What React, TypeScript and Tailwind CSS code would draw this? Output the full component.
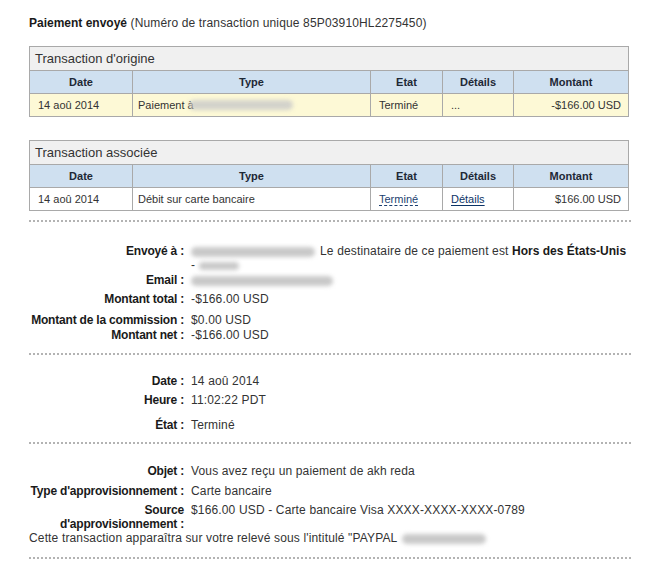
import React from "react";

const Blur = ({ w, h = 10, className = "" }: { w: number; h?: number; className?: string }) => (
  <span
    className={`inline-block align-middle rounded-full bg-[#c9c9c9] blur-[2px] ${className}`}
    style={{ width: w, height: h }}
  />
);

const Dotted = ({ className = "" }: { className?: string }) => (
  <div
    className={`h-[2px] w-[602px] bg-[linear-gradient(to_right,#b3b3b3_50%,transparent_50%)] bg-[length:4px_2px] ${className}`}
  />
);

const cols = "grid grid-cols-[102px_238px_72px_71px_1fr]";

function Table({
  title,
  row,
  yellow,
}: {
  title: string;
  row: React.ReactNode[];
  yellow?: boolean;
}) {
  const heads = ["Date", "Type", "Etat", "Détails", "Montant"];
  return (
    <div className="w-[600px] border border-[#a9a9a9]">
      <div className="h-[24px] bg-[#f0f0f0] border-b border-[#a9a9a9] pl-[5px] flex items-center text-[13px] text-[#333]">
        {title}
      </div>
      <div className={`${cols} h-[23px] bg-[#cfe0f0] border-b border-[#a9a9a9]`}>
        {heads.map((h, i) => (
          <div
            key={h}
            className={`flex items-center justify-center text-[11px] font-bold text-[#1e2836] ${i > 0 ? "border-l border-[#a9a9a9]" : ""}`}
          >
            {h}
          </div>
        ))}
      </div>
      <div className={`${cols} h-[22px] ${yellow ? "bg-[#fdf9d6]" : "bg-white"} text-[11px] text-[#333]`}>
        {row.map((c, i) => (
          <div
            key={i}
            className={`flex items-center whitespace-nowrap ${i > 0 ? "border-l border-[#a9a9a9]" : ""} ${
              i === 0 ? "pl-[8px]" : i === 1 ? "pl-[5px]" : i === 4 ? "justify-end pr-[7px]" : "pl-[8px]"
            }`}
          >
            {c}
          </div>
        ))}
      </div>
    </div>
  );
}

const Row = ({
  label,
  children,
  className = "",
}: {
  label: React.ReactNode;
  children?: React.ReactNode;
  className?: string;
}) => (
  <div className={`flex text-[12px] leading-[14px] ${className}`}>
    <div className="w-[155px] shrink-0 flex flex-col items-end whitespace-nowrap font-bold tracking-[-0.2px] text-[#1a1a1a]">
      {label}
    </div>
    <div className="pl-[7px] text-[#333] tracking-[0.15px]">{children}</div>
  </div>
);

export default function App() {
  return (
    <div className="w-[672px] h-[568px] bg-white font-['Liberation_Sans',Arial,sans-serif] pl-[29px] pt-[16px] overflow-hidden">
      <div className="text-[12px] leading-[14px] text-[#333] tracking-[0.15px]">
        <span className="font-bold text-[#1a1a1a] tracking-normal">Paiement envoyé</span> (Numéro de transaction
        unique 85P03910HL2275450)
      </div>

      <div className="mt-[16px]">
        <Table
          title="Transaction d'origine"
          yellow
          row={[
            "14 aoû 2014",
            <>
              Paiement à&nbsp;
              <Blur w={104} h={10} className="-ml-[8px] opacity-80" />
            </>,
            "Terminé",
            "...",
            "-$166.00 USD",
          ]}
        />
      </div>

      <div className="mt-[23px]">
        <Table
          title="Transaction associée"
          row={[
            "14 aoû 2014",
            "Débit sur carte bancaire",
            <span className="text-[#1c3f70] border-b border-dashed border-[#1c3f70] leading-[12px]">Terminé</span>,
            <span className="text-[#0b3366] underline underline-offset-2">Détails</span>,
            "$166.00 USD",
          ]}
        />
      </div>

      <Dotted className="mt-[9px]" />

      <Row label="Envoyé à :" className="mt-[22px]">
        <div className="whitespace-nowrap">
          <Blur w={124} h={10} />
          <span className="ml-[5px]">Le destinataire de ce paiement est </span>
          <span className="font-bold text-[#1a1a1a] tracking-normal">Hors des États-Unis</span>
        </div>
        <div>
          - <Blur w={40} h={8} />
        </div>
      </Row>
      <Row label="Email :" className="mt-px">
        <Blur w={142} h={10} />
      </Row>
      <Row label="Montant total :" className="mt-[5px]">
        -$166.00 USD
      </Row>
      <Row label="Montant de la commission :" className="mt-[7px]">
        $0.00 USD
      </Row>
      <Row label="Montant net :" className="mt-px">
        -$166.00 USD
      </Row>

      <Dotted className="mt-[11px]" />

      <Row label="Date :" className="mt-[19px]">
        14 aoû 2014
      </Row>
      <Row label="Heure :" className="mt-[5px]">
        11:02:22 PDT
      </Row>
      <Row label="État :" className="mt-[11px]">
        Terminé
      </Row>

      <Dotted className="mt-[10px]" />

      <Row label="Objet :" className="mt-[20px]">
        Vous avez reçu un paiement de akh reda
      </Row>
      <Row label="Type d'approvisionnement :" className="mt-[6px]">
        Carte bancaire
      </Row>
      <Row
        label={
          <>
            <span>Source</span>
            <span>d'approvisionnement :</span>
          </>
        }
        className="mt-[5px]"
      >
        $166.00 USD - Carte bancaire Visa XXXX-XXXX-XXXX-0789
      </Row>
      <div className="text-[12px] leading-[14px] text-[#333] tracking-[0.15px] whitespace-nowrap">
        Cette transaction apparaîtra sur votre relevé sous l'intitulé "PAYPAL{" "}
        <Blur w={84} h={10} className="ml-[2px]" />
      </div>

      <Dotted className="mt-[12px]" />
    </div>
  );
}
